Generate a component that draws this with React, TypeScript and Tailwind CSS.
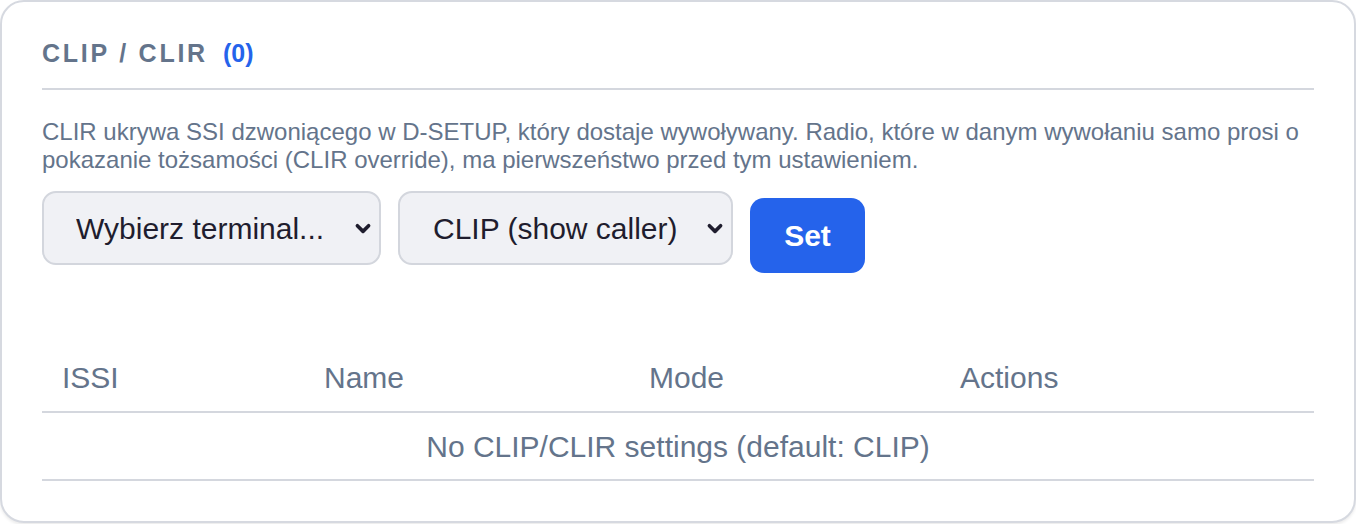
import { useState } from 'react';

const terminals = ['Wybierz terminal...'];
const modes = ['CLIP (show caller)', 'CLIR (hide caller)'];

function Chevron() {
  return (
    <svg
      className="pointer-events-none absolute right-[9px] top-1/2 h-[18px] w-[18px] -translate-y-1/2 text-[#1f1d2e]"
      viewBox="0 0 16 16"
      fill="none"
      stroke="currentColor"
      strokeWidth={3.2}
      strokeLinecap="round"
      strokeLinejoin="round"
    >
      <path d="M3 6l5 5 5-5" />
    </svg>
  );
}

export default function App() {
  const [terminal, setTerminal] = useState(terminals[0]);
  const [mode, setMode] = useState(modes[0]);
  const settings: { issi: string; name: string; mode: string }[] = [];

  return (
    <div className="min-h-screen bg-white font-['Liberation_Sans',Arial,sans-serif]">
      <div className="rounded-[24px] border-2 border-[#d6d9e0] bg-white px-10 pt-[35px] pb-[40px] shadow-[0_2px_3px_rgba(0,0,0,0.08)]">
        {/* Header */}
        <div className="flex items-center border-b-2 border-[#d4d7de] pb-[18px]">
          <h2 className="text-[25px] leading-[33px] font-bold uppercase tracking-[0.11em] text-[#64748b]">
            CLIP / CLIR
          </h2>
          <span className="ml-[15px] text-[25px] leading-[33px] font-bold text-[#2563eb]">
            ({settings.length})
          </span>
        </div>

        <p className="mt-[28px] text-[24px] leading-[28px] text-[#64748b]">
          CLIR ukrywa SSI dzwoniącego w D-SETUP, który dostaje wywoływany. Radio, które w danym wywołaniu samo prosi o
          pokazanie tożsamości (CLIR override), ma pierwszeństwo przed tym ustawieniem.
        </p>

        {/* Controls */}
        <div className="mt-[17px] flex items-start gap-[17px]">
          <div className="relative">
            <select
              value={terminal}
              onChange={(e) => setTerminal(e.target.value)}
              className="h-[74px] w-[339px] appearance-none rounded-[14px] border-2 border-[#d3d6dd] bg-[#f0f1f5] pl-[32px] text-[30px] text-[#1f1d2e] outline-none"
            >
              {terminals.map((t) => (
                <option key={t}>{t}</option>
              ))}
            </select>
            <Chevron />
          </div>
          <div className="relative">
            <select
              value={mode}
              onChange={(e) => setMode(e.target.value)}
              className="h-[74px] w-[335px] appearance-none rounded-[14px] border-2 border-[#d3d6dd] bg-[#f0f1f5] pl-[33px] text-[30px] text-[#1f1d2e] outline-none"
            >
              {modes.map((m) => (
                <option key={m}>{m}</option>
              ))}
            </select>
            <Chevron />
          </div>
          <button className="mt-[7px] h-[75px] w-[115px] rounded-[14px] bg-[#2563eb] text-[30px] font-bold text-white">
            Set
          </button>
        </div>

        {/* Table */}
        <table className="mt-[71px] w-full table-fixed border-collapse text-[30px] text-[#64748b]">
          <colgroup>
            <col className="w-[262px]" />
            <col className="w-[325px]" />
            <col className="w-[311px]" />
            <col />
          </colgroup>
          <thead>
            <tr className="border-b-2 border-[#d4d7de]">
              <th className="h-[68px] pl-[20px] text-left font-normal">ISSI</th>
              <th className="h-[68px] pl-[20px] text-left font-normal">Name</th>
              <th className="h-[68px] pl-[20px] text-left font-normal">Mode</th>
              <th className="h-[68px] pl-[20px] text-left font-normal">Actions</th>
            </tr>
          </thead>
          <tbody>
            {settings.length === 0 && (
              <tr className="border-b-2 border-[#d4d7de]">
                <td colSpan={4} className="h-[68px] text-center">
                  No CLIP/CLIR settings (default: CLIP)
                </td>
              </tr>
            )}
          </tbody>
        </table>
      </div>
    </div>
  );
}
